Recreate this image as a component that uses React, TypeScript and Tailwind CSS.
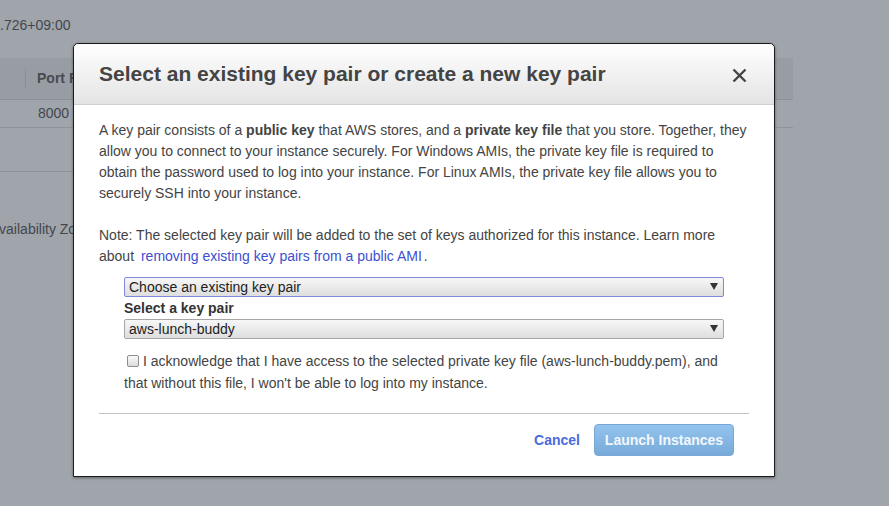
import React from 'react'

function SelectBox({ label, focused }: { label: string; focused?: boolean }) {
  return (
    <div
      className={
        'relative flex h-[20px] w-[600px] items-center rounded-[2px] border bg-gradient-to-b from-[#f7f7f7] to-[#dedede] pl-[4px] text-[14px] leading-none text-[#222] ' +
        (focused ? 'border-[#7f88dc]' : 'border-[#a6a6a6]')
      }
    >
      {label}
      <span className="absolute right-[5px] top-[5px] h-0 w-0 border-x-[4px] border-t-[7px] border-x-transparent border-t-[#333]" />
    </div>
  )
}

export default function App() {
  return (
    <div className="relative h-screen w-full overflow-hidden bg-[#a0a4ab] font-['Liberation_Sans',Arial,sans-serif] text-[14px] text-[#43474d]">
      {/* page behind the overlay */}
      <div className="h-[58px] pt-[15px] leading-[21px]">.726+09:00</div>
      <div className="flex h-[42px] w-[793px] items-center border-b border-[#8d9198] bg-[#989da4]">
        <div className="ml-[25px] h-[20px] w-px bg-[#8a8f96]" />
        <span className="ml-[11px] font-bold text-[#474b51]">Port Range</span>
      </div>
      <div className="flex h-[28px] w-[793px] items-center border-b border-[#8f949b] pl-[38px]">8000</div>
      <div className="h-[44px] w-[760px] border-b border-[#8f949b]" />
      <div className="-ml-[10px] mt-[47px] leading-[21px]">Availability Zone</div>

      {/* modal */}
      <div className="absolute left-[73px] top-[43px] flex h-[434px] w-[702px] flex-col rounded-t-[5px] border border-[#1a1a1a] bg-white shadow-[0_1px_3px_rgba(0,0,0,0.4)]">
        <div className="flex h-[61px] items-center justify-between rounded-t-[5px] border-b border-[#cfcfcf] bg-gradient-to-b from-white to-[#e4e4e4] pl-[25px] pr-[27px]">
          <h1 className="text-[21px] font-bold text-[#444]">Select an existing key pair or create a new key pair</h1>
          <svg width="15" height="15" viewBox="0 0 15 15" className="mt-[2px]">
            <path d="M1.5 1.5 L13.5 13.5 M13.5 1.5 L1.5 13.5" stroke="#444" strokeWidth="2.4" />
          </svg>
        </div>
        <div className="px-[25px] pt-[15px] leading-[21px] text-[#444]">
          <p className="mb-[21px]">
            A key pair consists of a <b>public key</b> that AWS stores, and a <b>private key file</b> that you store.
            Together, they allow you to connect to your instance securely. For Windows AMIs, the private key file is
            required to obtain the password used to log into your instance. For Linux AMIs, the private key file allows
            you to securely SSH into your instance.
          </p>
          <p>
            Note: The selected key pair will be added to the set of keys authorized for this instance. Learn more about{' '}
            <span className="pl-[3px] pr-[2px] text-[#3d4fcf]">removing existing key pairs from a public AMI</span>.
          </p>
          <div className="ml-[25px] mt-[10px] w-[600px]">
            <SelectBox label="Choose an existing key pair" focused />
            <div className="font-bold leading-[22px] text-[#333]">Select a key pair</div>
            <SelectBox label="aws-lunch-buddy" />
            <p className="mt-[11px] leading-[22px]">
              <span className="relative top-[1px] ml-[3px] mr-[4px] inline-block h-[12px] w-[12px] rounded-[2px] border border-[#8e8e8e] bg-gradient-to-b from-[#fafafa] to-[#dcdcdc]" />
              I acknowledge that I have access to the selected private key file (aws-lunch-buddy.pem), and that without
              this file, I won't be able to log into my instance.
            </p>
          </div>
          <div className="mt-[19px] h-px bg-[#c3c3c3]" />
          <div className="flex items-center justify-end gap-[14px] pr-[15px] pt-[10px]">
            <span className="font-bold text-[#4a6bdb]">Cancel</span>
            <button className="h-[32px] w-[140px] rounded-[4px] border border-[#79a8d6] bg-gradient-to-b from-[#93c4ef] to-[#78aad8] font-bold text-[#f2f7fc]">
              Launch Instances
            </button>
          </div>
        </div>
      </div>
    </div>
  )
}
